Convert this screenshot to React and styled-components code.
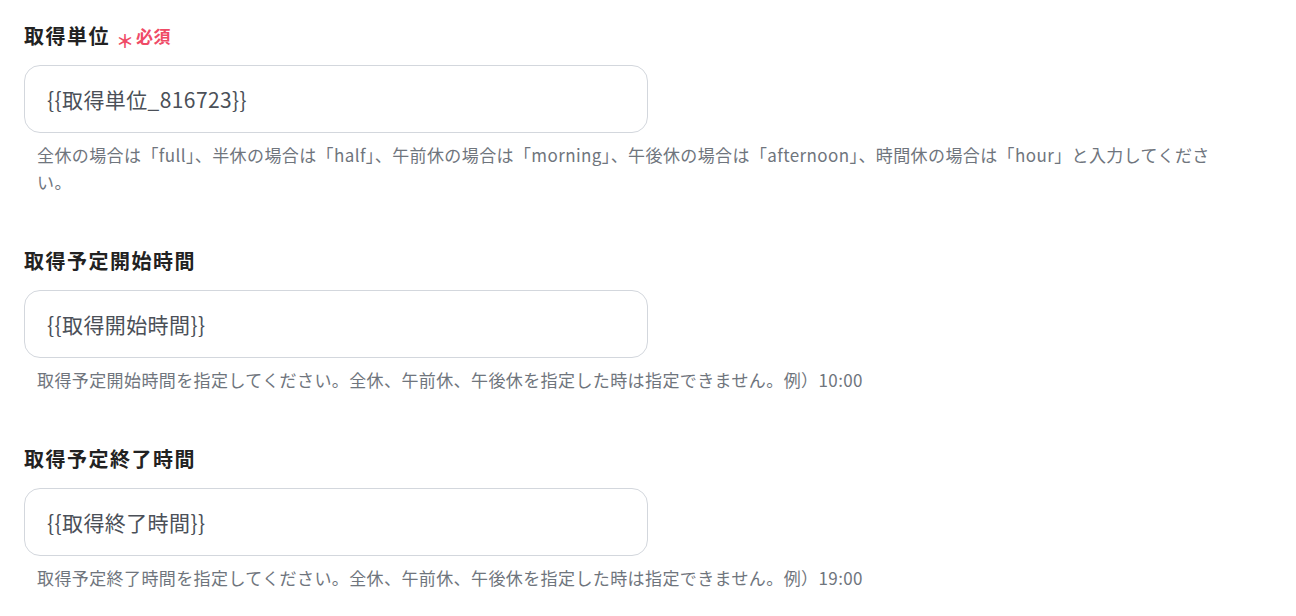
import React from 'react'
import styled, { createGlobalStyle } from 'styled-components'

const GlobalStyle = createGlobalStyle`
  body {
    margin: 0;
    background: #ffffff;
    font-family: "Noto Sans CJK JP", "Noto Sans", sans-serif;
  }
`

const fields = [
  {
    label: '取得単位',
    required: true,
    value: '{{取得単位_816723}}',
    help: '全休の場合は「full」、半休の場合は「half」、午前休の場合は「morning」、午後休の場合は「afternoon」、時間休の場合は「hour」と入力してください。'
  },
  {
    label: '取得予定開始時間',
    value: '{{取得開始時間}}',
    help: '取得予定開始時間を指定してください。全休、午前休、午後休を指定した時は指定できません。例）10:00'
  },
  {
    label: '取得予定終了時間',
    value: '{{取得終了時間}}',
    help: '取得予定終了時間を指定してください。全休、午前休、午後休を指定した時は指定できません。例）19:00'
  }
]

const App = () => (
  <>
    <GlobalStyle />
    <Form>
      {fields.map((f) => (
        <Field key={f.label}>
          <Label>
            {f.label}
            {f.required && (
              <Required>
                <Star>＊</Star>必須
              </Required>
            )}
          </Label>
          <Input defaultValue={f.value} />
          <Help>{f.help}</Help>
        </Field>
      ))}
    </Form>
  </>
)

export default App

const Form = styled.div`
  width: 1220px;
  padding: 24px 0 0 24px;
  display: flex;
  flex-direction: column;
  gap: 54px;
`

const Field = styled.div`
  display: flex;
  flex-direction: column;
`

const Label = styled.div`
  display: flex;
  align-items: center;
  height: 24px;
  font-size: 20px;
  line-height: 24px;
  font-weight: 700;
  letter-spacing: 1.5px;
  color: #222222;
  margin-bottom: 17px;
`

const Required = styled.span`
  display: inline-flex;
  align-items: center;
  margin-left: 4px;
  font-size: 17px;
  font-weight: 700;
  letter-spacing: 0.5px;
  color: #ef4b66;
`

const Star = styled.span`
  display: inline-block;
  width: 16px;
  font-size: 18px;
  font-weight: 700;
  line-height: 24px;
  letter-spacing: 0;
  margin: 0 4px 0 2px;
  overflow: visible;
  transform: translateY(4px);
`

const Input = styled.input`
  box-sizing: border-box;
  width: 624px;
  height: 68px;
  padding: 0 22px;
  border: 1px solid #d3d7dd;
  border-radius: 16px;
  background: #ffffff;
  font-family: "Noto Sans CJK JP", "Noto Sans", sans-serif;
  font-size: 21px;
  letter-spacing: 0.4px;
  color: #4b5058;
  outline: none;
`

const Help = styled.p`
  margin: 8px 0 0;
  padding: 0 0 0 13px;
  font-size: 17px;
  line-height: 27px;
  letter-spacing: 0.4px;
  color: #6f757d;
`
